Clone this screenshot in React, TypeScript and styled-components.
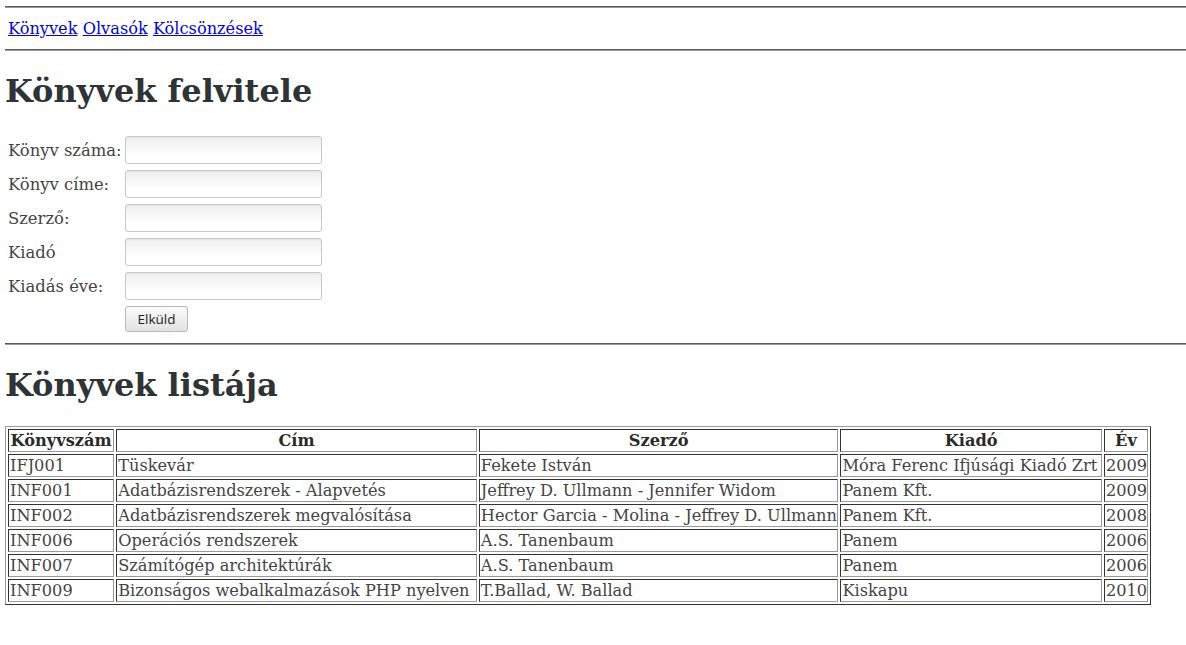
import React from 'react';
import styled, { createGlobalStyle } from 'styled-components';

const GlobalStyle = createGlobalStyle`
    body {
        margin      : 6px 0 0 5px;
        background  : #fff;
        color       : #444;
        font-family : "DejaVu Serif", "Liberation Serif", serif;
        font-size   : 16.4px;
    }
`

type Book = {
    id: string
    title: string
    author: string
    publisher: string
    year: number
}

const books: Book[] = [
    { id: 'IFJ001', title: 'Tüskevár', author: 'Fekete István', publisher: 'Móra Ferenc Ifjúsági Kiadó Zrt', year: 2009 },
    { id: 'INF001', title: 'Adatbázisrendszerek - Alapvetés', author: 'Jeffrey D. Ullmann - Jennifer Widom', publisher: 'Panem Kft.', year: 2009 },
    { id: 'INF002', title: 'Adatbázisrendszerek megvalósítása', author: 'Hector Garcia - Molina - Jeffrey D. Ullmann', publisher: 'Panem Kft.', year: 2008 },
    { id: 'INF006', title: 'Operációs rendszerek', author: 'A.S. Tanenbaum', publisher: 'Panem', year: 2006 },
    { id: 'INF007', title: 'Számítógép architektúrák', author: 'A.S. Tanenbaum', publisher: 'Panem', year: 2006 },
    { id: 'INF009', title: 'Bizonságos webalkalmazások PHP nyelven', author: 'T.Ballad, W. Ballad', publisher: 'Kiskapu', year: 2010 },
]

const fields = ['Könyv száma:', 'Könyv címe:', 'Szerző:', 'Kiadó', 'Kiadás éve:']

// content widths of the columns (cell padding and borders add 4px)
const columns = [
    { label: 'Könyvszám', width: 102 },
    { label: 'Cím', width: 356 },
    { label: 'Szerző', width: 355 },
    { label: 'Kiadó', width: 257 },
    { label: 'Év', width: 40 },
]

const App: React.FC = () => {
    return (
        <Page>
            <GlobalStyle />
            <Rule />
            <Nav>
                <a href="#konyvek">Könyvek</a> <a href="#olvasok">Olvasók</a> <a href="#kolcsonzesek">Kölcsönzések</a>
            </Nav>
            <Rule />
            <Heading>Könyvek felvitele</Heading>
            <Form onSubmit={e => e.preventDefault()}>
                {fields.map(f => (
                    <React.Fragment key={f}>
                        <Label>{f}</Label>
                        <Input type="text" />
                    </React.Fragment>
                ))}
                <span />
                <Submit type="submit">Elküld</Submit>
            </Form>
            <Rule $gap={11} />
            <Heading>Könyvek listája</Heading>
            <BookTable>
                <colgroup>
                    {columns.map(c => (
                        <Col key={c.label} $width={c.width + 4} />
                    ))}
                </colgroup>
                <thead>
                    <tr>
                        {columns.map(c => (
                            <Th key={c.label}>{c.label}</Th>
                        ))}
                    </tr>
                </thead>
                <tbody>
                    {books.map(b => (
                        <tr key={b.id}>
                            <Td>{b.id}</Td>
                            <Td>{b.title}</Td>
                            <Td>{b.author}</Td>
                            <Td>{b.publisher}</Td>
                            <Td>{b.year}</Td>
                        </tr>
                    ))}
                </tbody>
            </BookTable>
        </Page>
    );
}

export default App;

const Page = styled.div`
    display        : flex;
    flex-direction : column;
    align-items    : flex-start;
`

const Rule = styled.hr<{ $gap?: number }>`
    align-self    : stretch;
    margin        : ${p => p.$gap ?? 0}px 0 0;
    height        : 0;
    border        : none;
    border-top    : 1px solid #5a5a5a;
    border-bottom : 1px solid #9a9a9a;
`

const Nav = styled.nav`
    padding     : 10px 3px 9px;
    line-height : 22px;
    font-size   : 16.2px;

    > a {
        color : #0000ee;
    }
`

const Heading = styled.h1`
    margin      : 21px 0 0;
    color       : #2e3436;
    font-family : "DejaVu Serif", serif;
    font-size   : 32px;
    font-weight : 700;
    line-height : 38px;
`

const Form = styled.form`
    display               : grid;
    grid-template-columns : 114px 197px;
    column-gap            : 3px;
    row-gap               : 6px;
    align-items           : center;
    margin                : 26px 0 0 3px;
`

const Label = styled.label`
    white-space : nowrap;
`

const Input = styled.input`
    box-sizing    : border-box;
    width         : 197px;
    height        : 28px;
    border        : 1px solid #c8c8c8;
    border-radius : 3px;
    background    : linear-gradient(#eeeeee, #ffffff 70%);
    box-shadow    : inset 0 1px 1px rgba(0, 0, 0, 0.04);
`

const Submit = styled.button`
    justify-self  : start;
    box-sizing    : border-box;
    width         : 63px;
    height        : 26px;
    padding       : 0;
    border        : 1px solid #b8b8b8;
    border-radius : 3px;
    background    : linear-gradient(#fbfbfb, #e2e2e2);
    color         : #222;
    font-family   : "Open Sans", "DejaVu Sans", sans-serif;
    font-size     : 13.5px;
    font-weight   : 500;
`

const BookTable = styled.table`
    width           : 1146px;
    margin          : 22px 0 0;
    border          : 1px solid;
    border-color    : #999 #333 #333 #999;
    border-collapse : separate;
    border-spacing  : 2px;
    table-layout    : fixed;
    font-size       : 16.2px;
`

const Col = styled.col<{ $width: number }>`
    width : ${p => p.$width}px;
`

const Th = styled.th`
    height       : 19px;
    padding      : 1px;
    border       : 1px solid;
    border-color : #333 #999 #999 #333;
    color        : #2a2a2a;
    font-weight  : 600;
    line-height  : 19px;
    white-space  : nowrap;
`

const Td = styled.td`
    height       : 19px;
    padding      : 1px;
    border       : 1px solid;
    border-color : #333 #999 #999 #333;
    line-height  : 19px;
    white-space  : nowrap;
    overflow     : hidden;
`
